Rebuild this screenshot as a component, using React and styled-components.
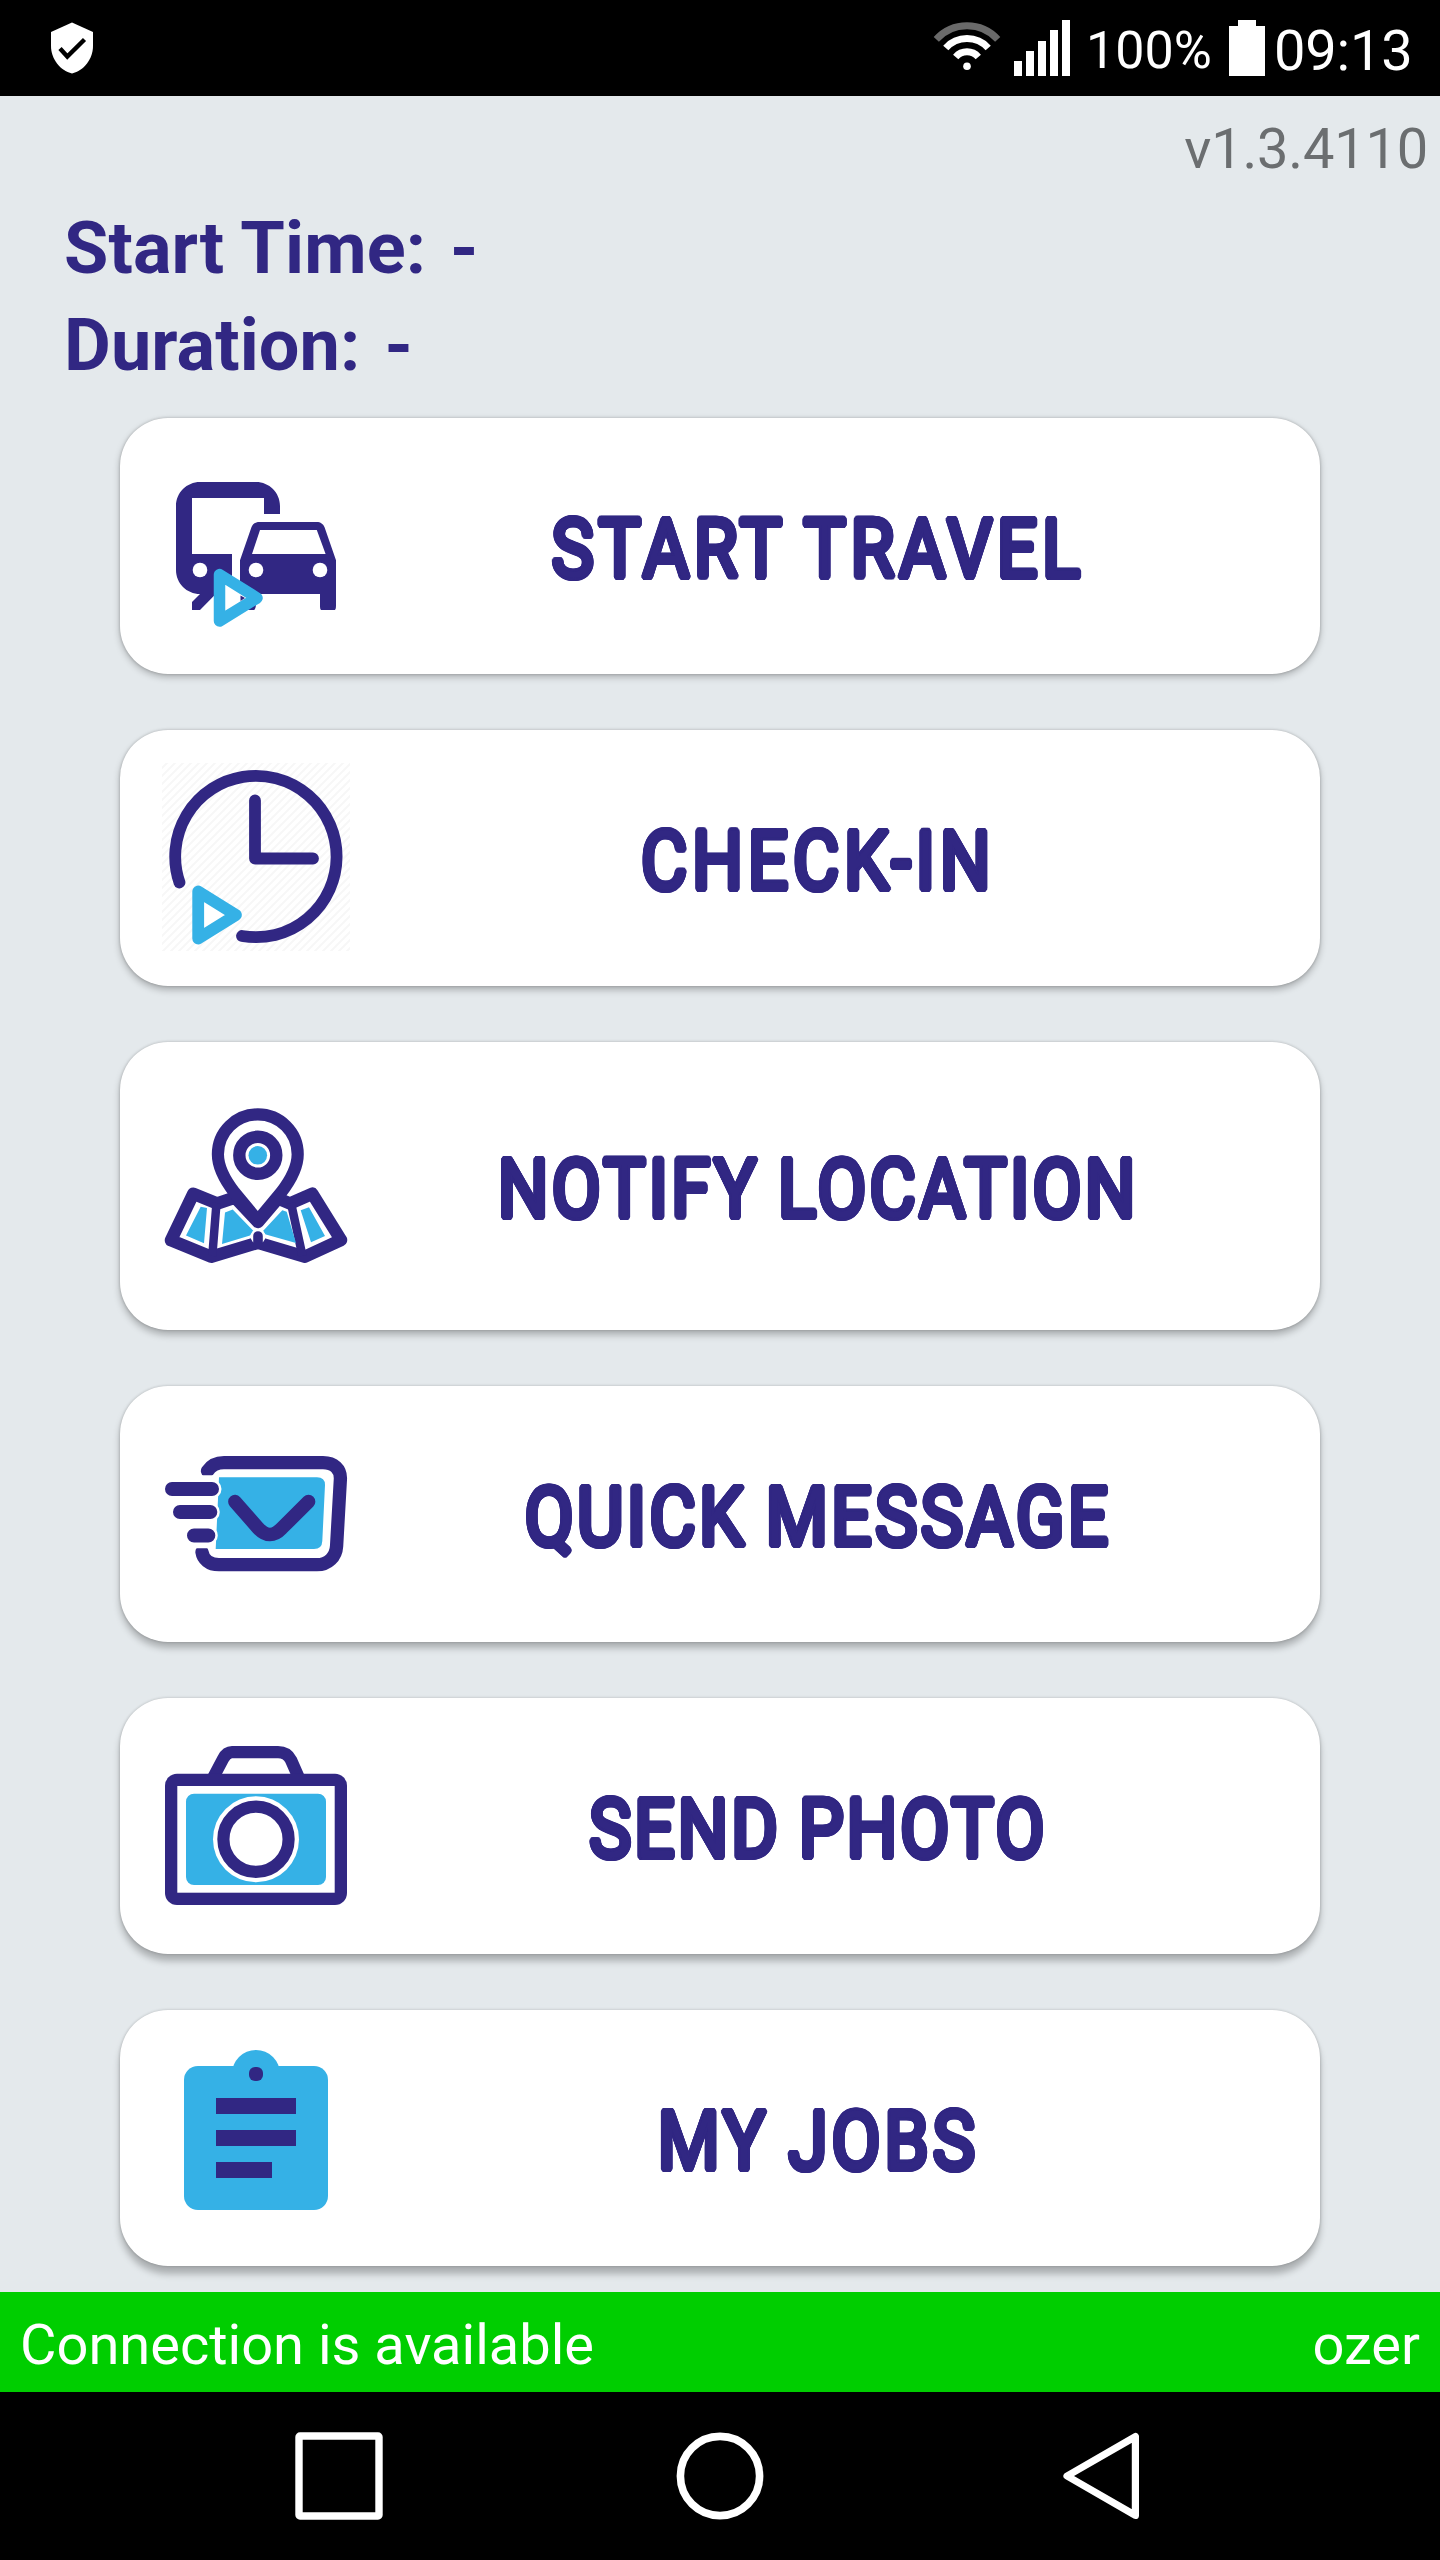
import styled, { createGlobalStyle } from 'styled-components';

const navy = '#312783';
const blue = '#35b1e6';

const GlobalStyle = createGlobalStyle`
  * {
    box-sizing: border-box;
  }
  body {
    margin: 0;
    font-family: Roboto, "Liberation Sans", sans-serif;
  }
`;

const Screen = styled.div`
  display: flex;
  flex-direction: column;
  width: 1440px;
  height: 2560px;
  overflow: hidden;
  background: #e4e9ec;
`;

const StatusBar = styled.header`
  display: flex;
  align-items: flex-start;
  height: 96px;
  padding: 20px 27px 0 44px;
  background: #000;
  color: #fff;
`;

const StatusRight = styled.div`
  display: flex;
  align-items: flex-start;
  margin-left: auto;
`;

const Percent = styled.span`
  width: 144px;
  padding: 0 0 0 14px;
  font-size: 52px;
  line-height: 62px;
`;

const Clock = styled.span`
  width: 139px;
  margin-left: 8px;
  font-size: 56px;
  line-height: 62px;
  letter-spacing: -0.2px;
  white-space: nowrap;
`;

const Main = styled.main`
  display: flex;
  flex-direction: column;
  height: 2196px;
`;

const Version = styled.div`
  height: 104px;
  padding: 20px 12px 0 0;
  color: #6b6e70;
  font-size: 56px;
  line-height: 66px;
  letter-spacing: -0.2px;
  text-align: right;
`;

const Info = styled.div`
  height: 218px;
  padding-left: 64px;
  color: ${navy};
  font-size: 72px;
  font-weight: 700;
  line-height: 97px;
  letter-spacing: 0.1px;
`;

const InfoRow = styled.div`
  display: flex;
  gap: 24px;
`;

const Menu = styled.nav`
  display: flex;
  flex-direction: column;
  gap: 56px;
  padding: 0 120px;
`;

const MenuButton = styled.button`
  display: flex;
  align-items: center;
  height: ${(p) => (p.$tall ? 288 : 256)}px;
  padding: 0 40px;
  border: 0;
  border-radius: 48px;
  background: #fff;
  color: ${navy};
  font-family: inherit;
  box-shadow: 0 ${(p) => p.$depth}px 7px rgba(0, 0, 0, 0.25), 0 0 3px rgba(0, 0, 0, 0.22);
`;

const Icon = styled.svg`
  flex: none;
  width: 192px;
  height: 192px;
`;

// a ring of shadows thickens the strokes and rounds their ends
const ring = Array.from({ length: 16 }, (_, i) => {
  const a = (i * Math.PI) / 8;
  return `${(Math.cos(a) * 2.9).toFixed(2)}px ${(Math.sin(a) * 2.9).toFixed(2)}px 0 ${navy}`;
}).join(', ');

const Label = styled.span`
  flex: 1;
  padding: 5px 0 0 5px;
  font-size: 82px;
  font-weight: 400;
  line-height: 106px;
  letter-spacing: ${(p) => p.$spacing}px;
  word-spacing: -3px;
  text-align: center;
  text-shadow: ${ring};
  white-space: nowrap;
  transform: scaleX(0.87);
`;

const Footer = styled.footer`
  display: flex;
  justify-content: space-between;
  height: 100px;
  padding: 0 20px;
  background: #00ce00;
  color: #fff;
  font-size: 56px;
  line-height: 106px;
`;

const NavBar = styled.div`
  display: flex;
  justify-content: center;
  height: 168px;
  background: #000;
`;

const NavButton = styled.div`
  display: flex;
  align-items: center;
  justify-content: center;
  width: 381px;
`;

const TravelIcon = () => (
  <Icon viewBox="0 0 192 192">
    <path
      fill={navy}
      transform="scale(8)"
      d="M12 4H5C3.34 4 2 5.34 2 7v8c0 1.66 1.34 3 3 3l-1 1v1h1l2-2.03L9 18v-5H4V6h9v2h2V7c0-1.66-1.34-3-3-3z"
    />
    <path
      fill={navy}
      fillRule="evenodd"
      transform="scale(8)"
      d="M20.57 9.66c-.14-.4-.52-.66-.97-.66h-7.19c-.46 0-.83.26-.98.66L10 13.77v5.51c0 .38.01.72.2.72h1.5c.2 0 .3-.38.3-.76V18h8v1.24c0 .38 0 .76.2.76h1.6c.2 0 .2-.34.2-.72v-5.51l-1.43-4.11zM12.5 10h7.1l1.1 3h-9.2l1-3z"
    />
    <circle cx="40" cy="120" r="7.3" fill="#fff" />
    <circle cx="96" cy="120" r="7.3" fill="#fff" />
    <circle cx="160" cy="120" r="7.3" fill="#fff" />
    <path d="M59.5 124.5V171L97 148Z" fill="#fff" stroke={blue} strokeWidth="11.5" strokeLinejoin="round" />
    <path d="M80.5 145.5L85 148L80.5 151Z" fill={navy} />
  </Icon>
);

const ClockIcon = () => (
  <Icon viewBox="0 0 192 192" fill="none" strokeWidth="11.8" strokeLinecap="round" strokeLinejoin="round">
    <defs>
      <pattern id="hatch" width="8" height="8" patternUnits="userSpaceOnUse">
        <path d="M-2 10L10 -2M-2 2L2 -2M6 10L10 6" stroke="#f7f7f7" strokeWidth="2" />
      </pattern>
    </defs>
    <rect x="2" y="1" width="188" height="188" fill="url(#hatch)" />
    <path d="M19.5 120.5A80.7 80.7 0 1 1 82 174" stroke={navy} />
    <path d="M95 38.5V96.5H153" stroke={navy} />
    <path d="M38.2 129.5V176.5L76 153Z" fill="#fff" stroke={blue} />
  </Icon>
);

const LocationIcon = () => (
  <Icon viewBox="0 0 192 192" fill="none" strokeLinejoin="round">
    <path
      d="M75 107.5L57.3 113.5L33.3 103.7L11 150.3L51.3 166.7L98 152.7L145 166.7L181 150L152.3 103.7L130 113.5L118 108.5L98 132Z"
      fill="#fff"
      stroke={navy}
      strokeWidth="12.5"
    />
    <path d="M56.5 113L52.3 166M131 113L142.5 166" stroke={navy} strokeWidth="8.5" />
    <path
      fill={blue}
      d="M40.7 116.7L47 118L44 153.3L26 145.5ZM65 122.5L72.7 119.5L94 141.5L90 145.5L62 154ZM122.3 120.3L126.7 121.7L136 153L105 144.3L103 141ZM140.7 120.3L149 117.3L165 146L151 152.3Z"
    />
    <circle cx="98" cy="146.5" r="7.5" fill="#fff" />
    <path d="M93.2 154V146A4.8 4.8 0 0 1 102.8 146V154Z" fill={navy} />
    <path
      d="M97.8 24.4C75.8 24.4 57.9 42 57.9 64.3C57.9 80 67.5 93.5 74.5 102.5L97.8 130.5L121.1 102.5C128.1 93.5 137.7 80 137.7 64.3C137.7 42 119.8 24.4 97.8 24.4Z"
      fill="#fff"
      stroke={navy}
      strokeWidth="12.2"
    />
    <circle cx="97.8" cy="65.3" r="18.5" stroke={navy} strokeWidth="12.4" />
    <circle cx="97.8" cy="65.3" r="9.3" fill={blue} />
  </Icon>
);

const MessageIcon = () => (
  <Icon viewBox="0 0 192 192" fill="none" strokeLinecap="round">
    <path
      d="M47.5 53Q53 44.7 64 44.7H163C174 44.7 180.8 51 180.4 61L176.6 128C176 139 168 146.7 157 146.7H59C49 146.7 43 141 42 134"
      stroke={navy}
      strokeWidth="13.3"
    />
    <path d="M30 57.3H58V130.3H30Z" fill="#fff" />
    <path d="M59 59.3H157Q165 59.3 165 67L162.3 123Q162 131 154 131H55.7Z" fill={blue} />
    <path d="M12 71H52M20 94H50.3M34 117.5H48.3" stroke="#fff" strokeWidth="19" />
    <path d="M12 71H52M20 94H50.3M34 117.5H48.3" stroke={navy} strokeWidth="14" />
    <path d="M75 83.7L98.5 110.5Q110 122.5 121.5 110.5L148.5 83.7" stroke={navy} strokeWidth="13.7" />
  </Icon>
);

const CameraIcon = () => (
  <Icon viewBox="0 0 192 192" fill="none">
    <path
      d="M53.5 47L63 29Q66.5 22.2 72 22.2H118Q127 22.2 131 30L138.5 47"
      stroke={navy}
      strokeWidth="12.3"
    />
    <rect x="5" y="43.7" width="182" height="131.3" rx="12" fill={navy} />
    <rect x="17.3" y="56" width="157.4" height="106.7" fill="#fff" />
    <rect x="26" y="63.7" width="140" height="91.3" rx="8" fill={blue} />
    <circle cx="96" cy="109.3" r="43" fill="#fff" />
    <circle cx="96" cy="109.3" r="32.6" stroke={navy} strokeWidth="12.2" />
  </Icon>
);

const JobsIcon = () => (
  <Icon viewBox="0 0 192 192">
    <circle cx="96" cy="32" r="24" fill={blue} />
    <rect x="24" y="24" width="144" height="144" rx="14" fill={blue} />
    <rect x="89" y="25" width="14" height="14" rx="6" fill={navy} />
    <path d="M56 56h80v16H56zM56 88h80v16H56zM56 120h56v16H56z" fill={navy} />
  </Icon>
);

const items = [
  { label: 'START TRAVEL', icon: TravelIcon, depth: 3, spacing: 5.2 },
  { label: 'CHECK-IN', icon: ClockIcon, depth: 4, spacing: 5.4 },
  { label: 'NOTIFY LOCATION', icon: LocationIcon, depth: 5, spacing: 3.6, tall: true },
  { label: 'QUICK MESSAGE', icon: MessageIcon, depth: 6, spacing: 3.8 },
  { label: 'SEND PHOTO', icon: CameraIcon, depth: 7, spacing: 3.2 },
  { label: 'MY JOBS', icon: JobsIcon, depth: 8, spacing: 4.4 },
];

const App = () => {
  return (
    <Screen>
      <GlobalStyle />
      <StatusBar>
        <svg width="56" height="56" viewBox="0 0 56 56">
          <path d="M28 2.5L49 12V26C49 39 40 50.5 28 53.5C16 50.5 7 39 7 26V12Z" fill="#fff" />
          <path d="M16 28.5L23.3 36.5L40.5 19.5" fill="none" stroke="#000" strokeWidth="4.4" />
        </svg>
        <StatusRight>
          {/* wifi, signal */}
          <svg width="144" height="56" viewBox="0 0 144 56" fill="none" strokeWidth="7">
            <path d="M8.3 19.4A41.4 41.4 0 0 1 69.7 19.4" stroke="#6a6a6a" />
            <path d="M17.8 28A28.6 28.6 0 0 1 60.2 28" stroke="#fff" />
            <path d="M27.7 37A15 15 0 0 1 50.3 37" stroke="#fff" />
            <circle cx="39" cy="46.2" r="3.8" fill="#fff" />
            <path d="M86 41h8v15h-8zM98 31h8v25h-8zM110 21h8v35h-8zM122 10h8v46h-8zM134 0h8v56h-8z" fill="#fff" />
          </svg>
          <Percent>100%</Percent>
          <svg width="50" height="56" viewBox="0 0 50 56">
            <path d="M13 6H22V0H40V6H49V56H13Z" fill="#fff" />
          </svg>
          <Clock>09:13</Clock>
        </StatusRight>
      </StatusBar>
      <Main>
        <Version>v1.3.4110</Version>
        <Info>
          <InfoRow><span>Start Time:</span><span>-</span></InfoRow>
          <InfoRow><span>Duration:</span><span>-</span></InfoRow>
        </Info>
        <Menu>
          {items.map(({ label, icon: ItemIcon, depth, spacing, tall }) => (
            <MenuButton key={label} $depth={depth} $tall={tall}>
              <ItemIcon />
              <Label $spacing={spacing}>{label}</Label>
            </MenuButton>
          ))}
        </Menu>
      </Main>
      <Footer>
        <span>Connection is available</span>
        <span>ozer</span>
      </Footer>
      <NavBar>
        <NavButton>
          <svg width="88" height="88" viewBox="0 0 88 88">
            <rect x="4" y="4" width="80" height="80" rx="1" fill="none" stroke="#fff" strokeWidth="7.4" />
          </svg>
        </NavButton>
        <NavButton>
          <svg width="88" height="88" viewBox="0 0 88 88">
            <circle cx="44" cy="44" r="39.6" fill="none" stroke="#fff" strokeWidth="7.6" />
          </svg>
        </NavButton>
        <NavButton>
          <svg width="88" height="88" viewBox="0 0 88 88">
            <path d="M78.4 4.6V83.4L10 44Z" fill="none" stroke="#fff" strokeWidth="7.2" strokeLinejoin="round" />
          </svg>
        </NavButton>
      </NavBar>
    </Screen>
  );
};

export default App;
